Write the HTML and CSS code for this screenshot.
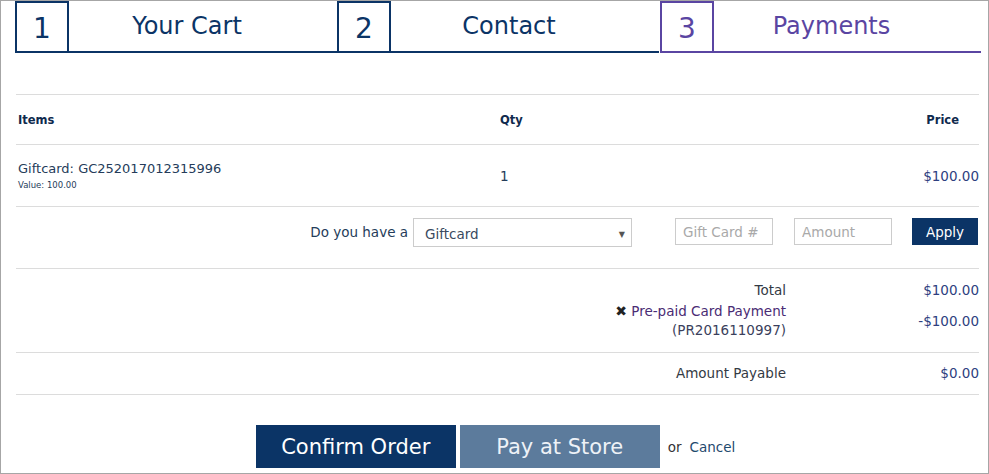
FILE: index.html
```html
<!DOCTYPE html>
<html lang="en">
<head>
    <meta charset="UTF-8">
    <meta name="viewport" content="width=device-width, initial-scale=1.0">
    <title>Checkout - Payments</title>
    <link rel="stylesheet" href="styles.css">
</head>
<body>
    <div class="page">
        <!-- Etapas do checkout -->
        <div class="steps">
            <div class="step">
                <div class="step-num">1</div>
                <div class="step-label">Your Cart</div>
            </div>
            <div class="step">
                <div class="step-num">2</div>
                <div class="step-label">Contact</div>
            </div>
            <div class="step active">
                <div class="step-num">3</div>
                <div class="step-label">Payments</div>
            </div>
        </div>

        <div class="cart">
            <table class="items">
                <thead>
                    <tr>
                        <th class="col-item">Items</th>
                        <th class="col-qty">Qty</th>
                        <th class="col-price">Price</th>
                    </tr>
                </thead>
                <tbody>
                    <tr>
                        <td class="col-item">
                            <div class="item-name">Giftcard: GC252017012315996</div>
                            <div class="item-value">Value: 100.00</div>
                        </td>
                        <td class="col-qty">1</td>
                        <td class="col-price money">$100.00</td>
                    </tr>
                </tbody>
            </table>

            <div class="giftcard-row">
                <span class="ask">Do you have a</span>
                <div class="select">
                    <span>Giftcard</span>
                    <span class="arrow">&#9660;</span>
                </div>
                <input type="text" class="field field-code" placeholder="Gift Card #">
                <input type="text" class="field field-amount" placeholder="Amount">
                <button class="btn-apply">Apply</button>
            </div>

            <div class="totals">
                <div class="total-line">
                    <div class="total-label">Total</div>
                    <div class="total-value money">$100.00</div>
                </div>
                <div class="total-line">
                    <div class="total-label"><span class="remove">&#10006;</span> <a href="#" class="discount">Pre-paid Card Payment</a><br><span class="ref">(PR2016110997)</span></div>
                    <div class="total-value money">-$100.00</div>
                </div>
            </div>

            <div class="payable">
                <div class="total-label">Amount Payable</div>
                <div class="total-value money">$0.00</div>
            </div>
        </div>

        <div class="actions">
            <button class="btn btn-confirm">Confirm Order</button>
            <button class="btn btn-store">Pay at Store</button>
            <span class="or">or</span>
            <a href="#" class="cancel">Cancel</a>
        </div>
    </div>
</body>
</html>
```

FILE: styles.css
```css
html, body {
    margin: 0;
    padding: 0;
}
body {
    font-family: "DejaVu Sans", sans-serif;
    color: #253c5a;
    background-color: #ffffff;
}
.page {
    box-sizing: border-box;
    height: 474px;
    border: 1px solid #a6a6a6;
    overflow: hidden;
}
/* Etapas */
.steps {
    display: flex;
    width: 966px;
    margin-left: 14px;
}
.step {
    flex: 1;
    display: flex;
    color: #0b3466;
}
.step-num {
    box-sizing: border-box;
    width: 54px;
    height: 52px;
    border: 2px solid #0b3466;
    display: flex;
    align-items: center;
    justify-content: center;
    font-size: 28px;
    padding-top: 2px;
}
.step-label {
    box-sizing: border-box;
    flex: 1;
    height: 52px;
    border-bottom: 2px solid #0b3466;
    display: flex;
    align-items: center;
    justify-content: center;
    padding: 0 32px 0 0;
    font-size: 24px;
}
.step.active {
    color: #5a45a2;
}
.step.active .step-num,
.step.active .step-label {
    border-color: #5a45a2;
}
.step.active .step-num {
    margin-left: 1px;
}
/* Carrinho */
.cart {
    width: 963px;
    margin: 41px 0 0 15px;
    font-size: 13.5px;
}
.items {
    width: 100%;
    border-collapse: collapse;
    border-top: 1px solid #dcdcdc;
}
.items th, .items td {
    padding: 0 2px;
    border-bottom: 1px solid #dcdcdc;
    text-align: left;
    vertical-align: middle;
}
.items th {
    height: 49px;
    font-size: 11.5px;
    font-weight: bold;
    color: #0f2a4d;
}
.items td {
    height: 61px;
}
.col-item {
    width: 478px;
}
.items th.col-price {
    text-align: right;
    padding-right: 20px;
}
.items td.col-price {
    text-align: right;
    padding-right: 0;
}
.item-name {
    font-size: 13px;
    padding-bottom: 4px;
}
.item-value {
    font-size: 8.5px;
}
.money {
    color: #2e3f80;
}
/* Vale presente */
.giftcard-row {
    box-sizing: border-box;
    height: 62px;
    border-bottom: 1px solid #dcdcdc;
    display: flex;
    align-items: flex-start;
    justify-content: flex-end;
    padding: 11px 1px 0 0;
}
.ask {
    margin: 6px 5px 0 0;
}
.select {
    box-sizing: border-box;
    width: 219px;
    height: 29px;
    border: 1px solid #cccccc;
    display: flex;
    align-items: center;
    justify-content: space-between;
    padding: 3px 6px 0 11px;
    color: #3a4a5e;
}
.arrow {
    font-size: 8px;
    color: #555555;
}
.field {
    box-sizing: border-box;
    width: 98px;
    height: 27px;
    border: 1px solid #cccccc;
    padding: 0 7px;
    font-family: "DejaVu Sans", sans-serif;
    font-size: 13.5px;
    color: #333333;
}
.field::placeholder {
    color: #a9a9a9;
}
.field-code {
    margin-left: 43px;
}
.field-amount {
    margin-left: 21px;
}
.btn-apply {
    box-sizing: border-box;
    width: 66px;
    height: 27px;
    margin-left: 20px;
    border: none;
    background-color: #0b3466;
    color: #ffffff;
    font-family: "DejaVu Sans", sans-serif;
    font-size: 13.5px;
    padding: 0;
}
/* Totais */
.totals {
    box-sizing: border-box;
    height: 84px;
    border-bottom: 1px solid #dcdcdc;
    padding-top: 12px;
}
.total-line, .payable {
    display: flex;
    align-items: center;
}
.total-line + .total-line {
    margin-top: 2px;
}
.total-label {
    flex: 1;
    text-align: right;
    line-height: 19px;
    color: #333a44;
}
.total-value {
    width: 193px;
    text-align: right;
    line-height: 19px;
}
.remove {
    color: #222222;
    font-size: 14px;
}
.discount {
    color: #4a2c74;
    text-decoration: none;
}
.ref {
    color: #3b3f5c;
}
.payable {
    box-sizing: border-box;
    height: 42px;
    border-bottom: 1px solid #dcdcdc;
}
/* Botoes */
.actions {
    display: flex;
    align-items: center;
    justify-content: center;
    margin-top: 30px;
    padding-left: 2px;
}
.btn {
    box-sizing: border-box;
    width: 200px;
    height: 43px;
    border: none;
    padding: 0;
    font-family: "DejaVu Sans", sans-serif;
    font-size: 21px;
    color: #ffffff;
}
.btn-confirm {
    background-color: #0b3466;
}
.btn-store {
    background-color: #5c7b9c;
    color: #eef2f7;
    margin-left: 4px;
}
.or {
    margin-left: 8px;
    font-size: 13.5px;
    color: #333333;
}
.cancel {
    margin-left: 8px;
    font-size: 13.5px;
    color: #1f4a6e;
    text-decoration: none;
}
```
